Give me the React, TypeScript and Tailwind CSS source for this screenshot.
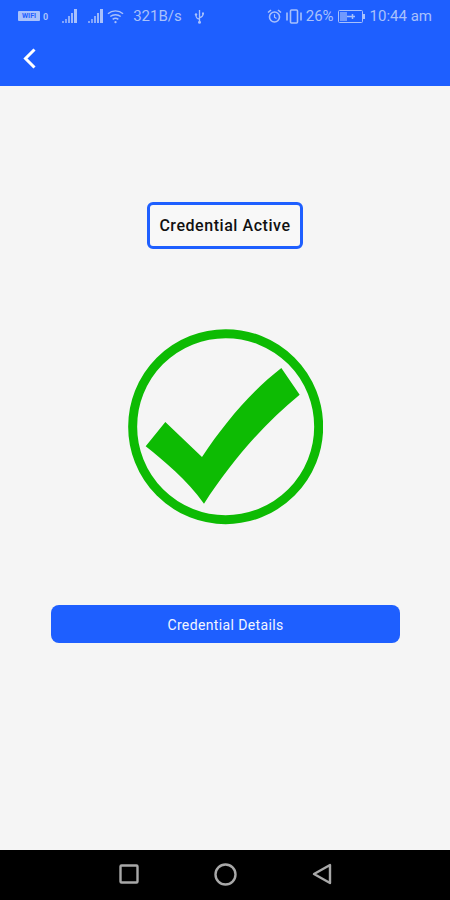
import React from 'react';

const font = { fontFamily: 'Roboto, sans-serif' };

function Signal() {
  return (
    <svg width="16" height="14" viewBox="0 0 16 14" fill="currentColor">
      <rect x="0" y="12" width="2" height="2" opacity="0.7" />
      <rect x="3" y="10" width="2" height="4" opacity="0.7" />
      <rect x="6" y="7" width="2" height="7" opacity="0.8" />
      <rect x="9" y="4" width="2" height="10" opacity="0.9" />
      <rect x="12" y="0" width="3" height="14" />
    </svg>
  );
}

function StatusBar() {
  return (
    <div className="flex h-[30px] items-center justify-between pt-[2px] pl-[18px] pr-[18px] text-[15px] text-[#a9c1fb]">
      <div className="flex items-center">
        <div className="flex h-[10px] w-[22px] items-center justify-center rounded-[1px] bg-[#a9c1fb] text-[7px] font-bold leading-none text-[#1e5fff]">
          WIFI
        </div>
        <span className="ml-[3px] mt-[3px] text-[9px] font-bold leading-none">0</span>
        <span className="ml-[14px] flex"><Signal /></span>
        <span className="ml-[10px] flex"><Signal /></span>
        <svg className="ml-[3px]" width="17" height="15" viewBox="0 0 18 15" fill="none" stroke="currentColor" strokeWidth="1.5">
          <path d="M1 4.5C5.5 0.5 12.5 0.5 17 4.5" />
          <path d="M3.5 7.5C6.5 5 11.5 5 14.5 7.5" />
          <path d="M6 10.5C7.8 9 10.2 9 12 10.5" />
          <circle cx="9" cy="13.5" r="1.2" fill="currentColor" stroke="none" />
        </svg>
        <span className="ml-[9px]">321B/s</span>
        <svg className="ml-[12px]" width="11" height="15" viewBox="0 0 11 15" fill="none" stroke="currentColor" strokeWidth="1.3">
          <path d="M5.5 1V13.5" />
          <path d="M5.5 10C2 9.5 2 8 2 6" />
          <path d="M5.5 8.5C9 8 9 6.5 9 5" />
          <circle cx="2" cy="5.5" r="1.2" fill="currentColor" stroke="none" />
          <rect x="8" y="3.5" width="2" height="2" fill="currentColor" stroke="none" />
          <circle cx="5.5" cy="13.2" r="1.5" fill="currentColor" stroke="none" />
        </svg>
      </div>
      <div className="flex items-center">
        <svg width="15" height="15" viewBox="0 0 15 15" fill="none" stroke="currentColor" strokeWidth="1.6">
          <circle cx="7.5" cy="8" r="5" />
          <path d="M7.5 5.2V8.2L9.5 9.5" strokeWidth="1.2" />
          <path d="M1 3.5L4 1M14 3.5L11 1" />
        </svg>
        <svg className="ml-[4px]" width="16" height="15" viewBox="0 0 16 15" fill="none" stroke="currentColor" strokeWidth="1.6">
          <rect x="4.5" y="1" width="7" height="13" rx="1" />
          <path d="M1 3.5V11.5M15 3.5V11.5" />
        </svg>
        <span className="ml-[4px]">26%</span>
        <svg className="ml-[4px]" width="27" height="13" viewBox="0 0 27 13" fill="none">
          <rect x="0.5" y="0.5" width="24" height="12" rx="1" stroke="currentColor" />
          <rect x="2" y="2" width="7" height="9" fill="currentColor" opacity="0.6" />
          <rect x="25" y="4" width="2" height="5" fill="currentColor" />
          <path d="M9 6.5H17M14.5 4V9" stroke="currentColor" strokeWidth="1.5" />
        </svg>
        <span className="ml-[5px]">10:44 am</span>
      </div>
    </div>
  );
}

function BigCheck() {
  return (
    <svg width="195" height="196" viewBox="40 28 585 588">
      <circle cx="333" cy="321" r="279" fill="none" stroke="#0dbb03" strokeWidth="27" />
      <path
        d="M93 380L152 307L262 412C330 310 410 215 500 145L555 225C450 310 350 425 268 552C215 480 150 425 93 380Z"
        fill="#0dbb03"
      />
    </svg>
  );
}

export default function App() {
  return (
    <div className="flex h-[900px] w-[450px] flex-col overflow-hidden bg-[#f5f5f5]" style={font}>
      <header className="h-[86px] bg-[#1e5fff]">
        <StatusBar />
        <div className="flex h-[56px] items-center pl-[23px]">
          <svg width="13" height="21" viewBox="0 0 13 21" fill="none" stroke="#ffffff" strokeWidth="3">
            <path d="M11.5 1.5L2.5 10.5L11.5 19.5" />
          </svg>
        </div>
      </header>

      <main className="flex flex-1 flex-col items-center pt-[116px]">
        <div className="flex h-[47px] w-[156px] items-center justify-center rounded-[6px] border-[3px] border-[#1e5fff] bg-[#f8f8f8] pt-[1px] text-[16px] font-medium tracking-[0.55px] text-[#111111]">
          Credential Active
        </div>
        <div className="mt-[80px] flex">
          <BigCheck />
        </div>
        <button className="mt-[80px] h-[38px] w-[349px] rounded-[8px] bg-[#1e5fff] pt-[2px] pl-[1px] text-[14px] tracking-[0.37px] text-[#f2f5ff]">
          Credential Details
        </button>
      </main>

      <nav className="flex h-[50px] items-center justify-center gap-[75px] bg-black pb-[2px] pl-[1px]">
        <svg width="20" height="20" viewBox="0 0 20 20" fill="none" stroke="#a8a8a8" strokeWidth="2.4">
          <rect x="1.5" y="1.5" width="17" height="17" rx="1" />
        </svg>
        <svg width="23" height="23" viewBox="0 0 23 23" fill="none" stroke="#a8a8a8" strokeWidth="2.4">
          <circle cx="11.5" cy="11.5" r="10" />
        </svg>
        <svg width="20" height="22" viewBox="0 0 20 22" fill="none" stroke="#a8a8a8" strokeWidth="2.4" strokeLinejoin="round">
          <path d="M18 2V20L2 11Z" />
        </svg>
      </nav>
    </div>
  );
}
